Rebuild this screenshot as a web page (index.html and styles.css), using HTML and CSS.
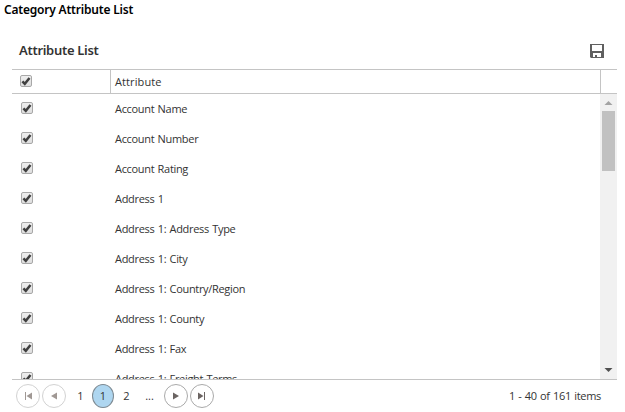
FILE: index.html
```html
<!DOCTYPE html>
<html lang="en">
<head>
<meta charset="utf-8">
<title>Category Attribute List</title>
<link rel="stylesheet" href="styles.css">
</head>
<body>
<svg class="defs" aria-hidden="true">
  <symbol id="check" viewBox="0 0 12 12">
    <path d="M2.4 6.3 4.8 8.8 9.5 3" fill="none" stroke="#404040" stroke-width="2.5"/>
  </symbol>
</svg>
<h1 class="title">Category Attribute List</h1>
<section class="grid">
  <header class="toolbar">
    <h2 class="heading">Attribute List</h2>
    <svg class="save" viewBox="0 0 14 14"><path fill="#606060" fill-rule="evenodd" d="M0 0H14V14H1L0 13ZM2 1V7H12V1ZM3 9V13H5V11H7V13H11V9Z"/></svg>
  </header>
  <div class="head">
    <div class="pick"><span class="box"><svg><use href="#check"/></svg></span></div>
    <div class="name">Attribute</div>
    <div class="corner"></div>
  </div>
  <div class="body">
    <div class="rows">
      <div class="row"><div class="pick"><span class="box"><svg><use href="#check"/></svg></span></div><div class="name">Account Name</div></div>
      <div class="row"><div class="pick"><span class="box"><svg><use href="#check"/></svg></span></div><div class="name">Account Number</div></div>
      <div class="row"><div class="pick"><span class="box"><svg><use href="#check"/></svg></span></div><div class="name">Account Rating</div></div>
      <div class="row"><div class="pick"><span class="box"><svg><use href="#check"/></svg></span></div><div class="name">Address 1</div></div>
      <div class="row"><div class="pick"><span class="box"><svg><use href="#check"/></svg></span></div><div class="name">Address 1: Address Type</div></div>
      <div class="row"><div class="pick"><span class="box"><svg><use href="#check"/></svg></span></div><div class="name">Address 1: City</div></div>
      <div class="row"><div class="pick"><span class="box"><svg><use href="#check"/></svg></span></div><div class="name">Address 1: Country/Region</div></div>
      <div class="row"><div class="pick"><span class="box"><svg><use href="#check"/></svg></span></div><div class="name">Address 1: County</div></div>
      <div class="row"><div class="pick"><span class="box"><svg><use href="#check"/></svg></span></div><div class="name">Address 1: Fax</div></div>
      <div class="row"><div class="pick"><span class="box"><svg><use href="#check"/></svg></span></div><div class="name">Address 1: Freight Terms</div></div>
    </div>
    <div class="scrollbar">
      <svg class="arrow" viewBox="0 0 17 17"><path d="M4.5 11 8.5 7 12.5 11Z" fill="#a3a3a3"/></svg>
      <div class="thumb"></div>
      <svg class="arrow down" viewBox="0 0 17 17"><path d="M4.5 6 8.5 10 12.5 6Z" fill="#505050"/></svg>
    </div>
  </div>
  <footer class="pager">
    <span class="nav off"><svg viewBox="0 0 10 8"><path d="M2 0H3V8H2ZM9 .5V7.5L3.5 4Z"/></svg></span>
    <span class="nav off"><svg viewBox="0 0 10 8"><path d="M8 .5V7.5L2 4Z"/></svg></span>
    <span class="page">1</span>
    <span class="page current">1</span>
    <span class="page">2</span>
    <span class="page dots">...</span>
    <span class="nav"><svg viewBox="0 0 10 8"><path d="M2 .5V7.5L8 4Z"/></svg></span>
    <span class="nav"><svg viewBox="0 0 10 8"><path d="M1 .5V7.5L6.5 4ZM7 0H8V8H7Z"/></svg></span>
    <span class="info">1 - 40 of 161 items</span>
  </footer>
</section>
</body>
</html>
```
FILE: styles.css
```css
* { box-sizing: border-box; }
body {
  margin: 0;
  height: 412px;
  overflow: hidden;
  background: #fff;
  color: #333;
  font: 11px/16px "Open Sans", "Noto Sans", sans-serif;
}
.defs { display: block; width: 0; height: 0; }
.title {
  margin: 0;
  padding: 2px 0 0 4px;
  height: 30px;
  color: #000;
  font-family: "Noto Sans", sans-serif;
  font-size: 12px;
  font-weight: 600;
  line-height: 16px;
  letter-spacing: -0.2px;
}
.grid { width: 605px; margin-left: 12px; }
.toolbar {
  display: flex;
  align-items: center;
  justify-content: space-between;
  height: 39px;
  padding: 1px 13px 0 7px;
}
.heading {
  margin: 0;
  font-family: "Noto Sans", sans-serif;
  font-size: 13px;
  font-weight: 600;
  line-height: 18px;
  letter-spacing: -0.3px;
}
.save { width: 14px; height: 14px; margin-top: 2px; }
.head {
  display: flex;
  height: 25px;
  border-top: 1px solid #c4c4c4;
  border-bottom: 1px solid #c4c4c4;
}
.pick { display: flex; align-items: center; width: 99px; padding-left: 9px; }
.name { flex: 1; display: flex; align-items: center; padding-left: 4px; white-space: nowrap; }
.head .pick { padding-left: 8px; border-right: 1px solid #c4c4c4; }
.head .box { margin-top: -1px; }
.head .name { letter-spacing: 0.1px; }
.corner { width: 17px; border-left: 1px solid #c4c4c4; }
.box {
  width: 12px;
  height: 12px;
  border: 1px solid #a8a8a8;
  border-radius: 2px;
  background: linear-gradient(#eee, #dedede);
}
.box svg { display: block; width: 12px; height: 12px; margin: -1px; }
.body { display: flex; height: 286px; overflow: hidden; border-bottom: 1px solid #c4c4c4; }
.rows { flex: 1; }
.row { display: flex; height: 30px; letter-spacing: -0.32px; word-spacing: 0.8px; }
.row .box { margin-top: -2px; }
.scrollbar { display: flex; flex-direction: column; width: 17px; background: #f1f1f1; }
.arrow { width: 17px; height: 17px; }
.thumb { width: 13px; height: 60px; margin-left: 2px; background: #c1c1c1; }
.down { margin-top: auto; }
.pager { display: flex; align-items: center; height: 32px; padding: 0 16px 0 4px; }
.nav {
  display: flex;
  align-items: center;
  justify-content: center;
  width: 24px;
  height: 24px;
  margin-right: 2px;
  border: 1px solid #aaa;
  border-radius: 50%;
  fill: #6b6462;
}
.nav svg { width: 10px; height: 8px; }
.off { border-color: #d2d2d2; fill: #a09894; }
.page { width: 23px; text-align: center; }
.page:nth-child(3) { margin-left: 1px; }
.current {
  width: 22px;
  height: 24px;
  margin-right: 1px;
  border: 1px solid #7e8a92;
  border-radius: 50%;
  background: #aed6f0;
  line-height: 22px;
}
.dots { margin-right: 3px; }
.info { margin-left: auto; letter-spacing: -0.32px; word-spacing: 0.8px; }
```
